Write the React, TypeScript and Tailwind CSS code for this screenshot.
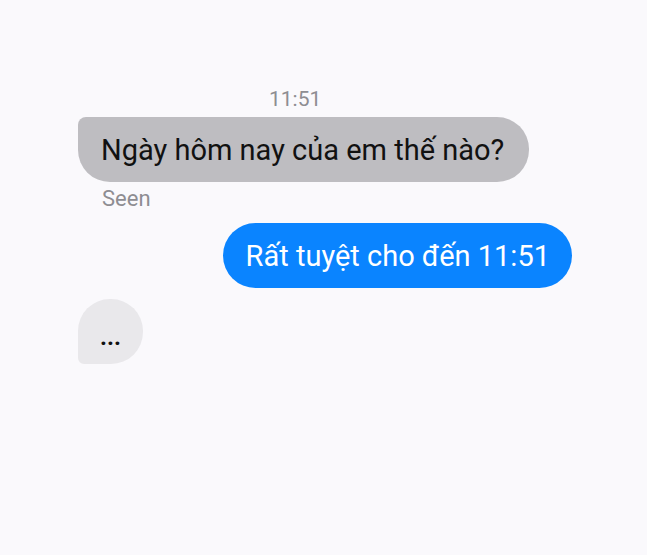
export default function App() {
  return (
    <div className="w-[647px] h-[555px] bg-[#faf9fc] font-['Roboto','Liberation_Sans',sans-serif] overflow-hidden">
      <div className="flex flex-col pt-[86px] pl-[78px] pr-[75px]">
        <div className="text-[21px] leading-[26px] text-[#8e8d92] pl-[191px]">11:51</div>
        <div className="mt-[5px] self-start h-[65px] flex items-center pt-[3px] pl-[23px] pr-[25px] bg-[#bebdc1] rounded-tl-[8px] rounded-bl-[32px] rounded-r-[32px] text-[29px] text-[#111]">
          Ngày hôm nay của em thế nào?
        </div>
        <div className="mt-[4px] pl-[24px] text-[22px] leading-[26px] text-[#8e8d92]">Seen</div>
        <div className="mt-[11px] self-end h-[65px] flex items-center pt-[3px] pl-[23px] pr-[22px] bg-[#0a84ff] rounded-full text-[29px] text-white">
          Rất tuyệt cho đến 11:51
        </div>
        <div className="mt-[11px] self-start w-[65px] h-[65px] flex items-center justify-center pt-[10px] bg-[#e9e8eb] rounded-t-[32px] rounded-br-[32px] rounded-bl-[6px] text-[24px] font-bold text-[#111]">
          ...
        </div>
      </div>
    </div>
  );
}
